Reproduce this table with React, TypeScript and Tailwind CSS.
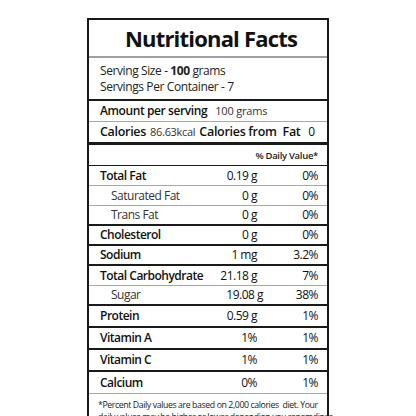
import React from 'react';

type Row = {
  name: string;
  amount: string;
  dv: string;
  bold?: boolean;
  indent?: boolean;
  line: 'grey' | 'black';
  tall?: boolean;
  shift?: boolean;
};

const rows: Row[] = [
  { name: 'Total Fat', amount: '0.19 g', dv: '0%', bold: true, line: 'grey' },
  { name: 'Saturated Fat', amount: '0 g', dv: '0%', indent: true, line: 'grey' },
  { name: 'Trans Fat', amount: '0 g', dv: '0%', indent: true, line: 'black' },
  { name: 'Cholesterol', amount: '0 g', dv: '0%', bold: true, line: 'black' },
  { name: 'Sodium', amount: '1 mg', dv: '3.2%', bold: true, line: 'black' },
  { name: 'Total Carbohydrate', amount: '21.18 g', dv: '7%', bold: true, line: 'grey' },
  { name: 'Sugar', amount: '19.08 g', dv: '38%', indent: true, line: 'black', shift: true },
  { name: 'Protein', amount: '0.59 g', dv: '1%', bold: true, line: 'black', tall: true },
  { name: 'Vitamin A', amount: '1%', dv: '1%', bold: true, line: 'black', tall: true },
  { name: 'Vitamin C', amount: '1%', dv: '1%', bold: true, line: 'black', tall: true },
  { name: 'Calcium', amount: '0%', dv: '1%', bold: true, line: 'grey', tall: true },
];

function NutrientRow({ row }: { row: Row }) {
  return (
    <div
      className={`grid grid-cols-[minmax(0,1fr)_60px_61px] items-center pr-[9px] text-[12px] tracking-[-0.5px] text-[#111] ${
        row.tall ? 'h-[22px]' : 'h-[20px]'
      } ${row.line === 'black' ? 'border-b-2 border-[#1a1a1a]' : 'border-b border-[#a8a8a8]'}`}
    >
      <span
        className={`whitespace-nowrap ${row.indent ? 'pl-[22px] text-[#333]' : 'pl-[11px] font-semibold'}`}
      >
        {row.name}
      </span>
      <span className={`whitespace-nowrap text-right ${row.shift ? 'translate-x-[6px]' : ''}`}>
        {row.amount}
      </span>
      <span className="text-right">{row.dv}</span>
    </div>
  );
}

export default function App() {
  return (
    <div
      className="w-[416px] h-[416px] overflow-hidden bg-white pt-[18px] pl-[87px]"
      style={{ fontFamily: '"Open Sans", "Noto Sans", sans-serif' }}
    >
      <div className="w-[242px] border-2 border-[#1a1a1a] bg-white">
        <div className="h-[38px] pl-[6px] flex items-center justify-center border-b-2 border-[#a0a0a0]">
          <h1 className="text-[22px] font-bold tracking-[-0.8px] text-[#111]">Nutritional Facts</h1>
        </div>

        <div className="pl-[11px] pt-[5px] pb-[4px] text-[12px] tracking-[-0.4px] leading-[16px] text-[#222] border-b-2 border-[#1a1a1a]">
          <div>
            Serving Size - <span className="font-bold">100</span> grams
          </div>
          <div>Servings Per Container - 7</div>
        </div>

        <div className="h-[21px] pl-[11px] flex items-center gap-[8px] border-b border-[#a8a8a8] text-[#111]">
          <span className="text-[12px] font-semibold tracking-[-0.4px]">Amount per serving</span>
          <span className="text-[11px] tracking-[-0.2px] text-[#333]">100 grams</span>
        </div>

        <div className="h-[23px] pl-[11px] pr-[12px] flex items-center whitespace-nowrap border-b-[3px] border-[#1a1a1a] text-[#111]">
          <span className="text-[12.5px] font-semibold tracking-[-0.3px]">Calories</span>
          <span className="text-[11px] tracking-[-0.3px] text-[#333] ml-[4px]">86.63kcal</span>
          <span className="text-[12.5px] font-semibold tracking-[-0.3px] ml-[4px]">Calories from&nbsp; Fat</span>
          <span className="text-[12px] ml-auto">0</span>
        </div>

        <div className="h-[21px] pt-[2px] flex items-center justify-end pr-[9px] border-b border-[#1a1a1a] text-[9.5px] tracking-[-0.3px] font-semibold text-[#222]">
          % Daily Value*
        </div>

        {rows.map((r) => (
          <NutrientRow key={r.name} row={r} />
        ))}

        <div className="px-[9px] pt-[5px] text-[8.75px] tracking-[-0.4px] leading-[12px] text-[#222] whitespace-nowrap">
          *Percent Daily values are based on 2,000 calories&nbsp; diet. Your
          <br />
          daily values may be higher or lower dependion you repemdings
        </div>
      </div>
    </div>
  );
}
